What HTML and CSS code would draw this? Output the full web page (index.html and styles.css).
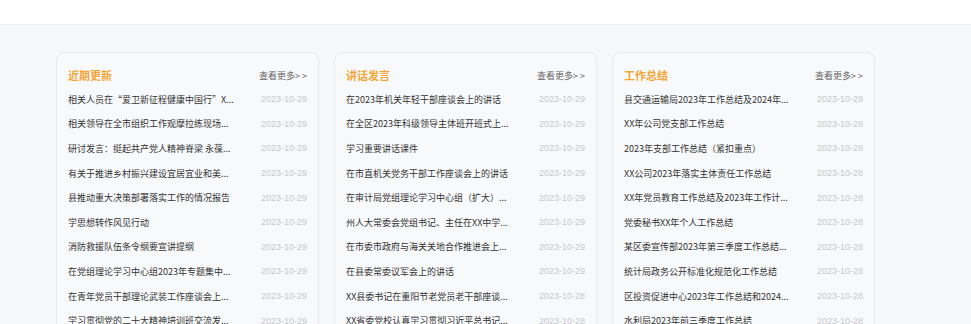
FILE: index.html
```html
<!DOCTYPE html>
<html lang="zh-CN">
<head>
<meta charset="utf-8">
<title>文章列表</title>
<link rel="stylesheet" href="styles.css">
</head>
<body>
<header class="topbar"></header>
<main class="main">
  <section class="card">
    <div class="card-head"><h2 class="card-title">近期更新</h2><a class="more">查看更多&gt; &gt;</a></div>
    <ul class="list">
      <li><span class="t">相关人员在“爱卫新征程健康中国行”X...</span><span class="d">2023-10-29</span></li>
      <li><span class="t">相关领导在全市组织工作观摩拉练现场...</span><span class="d">2023-10-29</span></li>
      <li><span class="t">研讨发言：挺起共产党人精神脊梁 永葆...</span><span class="d">2023-10-29</span></li>
      <li><span class="t">有关于推进乡村振兴建设宜居宜业和美...</span><span class="d">2023-10-29</span></li>
      <li><span class="t">县推动重大决策部署落实工作的情况报告</span><span class="d">2023-10-29</span></li>
      <li><span class="t">学思想转作风见行动</span><span class="d">2023-10-29</span></li>
      <li><span class="t">消防救援队伍条令纲要宣讲提纲</span><span class="d">2023-10-29</span></li>
      <li><span class="t">在党组理论学习中心组2023年专题集中...</span><span class="d">2023-10-29</span></li>
      <li><span class="t">在青年党员干部理论武装工作座谈会上...</span><span class="d">2023-10-29</span></li>
      <li><span class="t">学习贯彻党的二十大精神培训班交流发...</span><span class="d">2023-10-29</span></li>
    </ul>
  </section>
  <section class="card">
    <div class="card-head"><h2 class="card-title">讲话发言</h2><a class="more">查看更多&gt; &gt;</a></div>
    <ul class="list">
      <li><span class="t">在2023年机关年轻干部座谈会上的讲话</span><span class="d">2023-10-29</span></li>
      <li><span class="t">在全区2023年科级领导主体班开班式上...</span><span class="d">2023-10-29</span></li>
      <li><span class="t">学习重要讲话课件</span><span class="d">2023-10-29</span></li>
      <li><span class="t">在市直机关党务干部工作座谈会上的讲话</span><span class="d">2023-10-29</span></li>
      <li><span class="t">在审计局党组理论学习中心组（扩大）...</span><span class="d">2023-10-29</span></li>
      <li><span class="t">州人大常委会党组书记、主任在XX中学...</span><span class="d">2023-10-29</span></li>
      <li><span class="t">在市委市政府与海关关地合作推进会上...</span><span class="d">2023-10-29</span></li>
      <li><span class="t">在县委常委议军会上的讲话</span><span class="d">2023-10-29</span></li>
      <li><span class="t">XX县委书记在重阳节老党员老干部座谈...</span><span class="d">2023-10-28</span></li>
      <li><span class="t">XX省委党校认真学习贯彻习近平总书记...</span><span class="d">2023-10-28</span></li>
    </ul>
  </section>
  <section class="card">
    <div class="card-head"><h2 class="card-title">工作总结</h2><a class="more">查看更多&gt; &gt;</a></div>
    <ul class="list">
      <li><span class="t">县交通运输局2023年工作总结及2024年...</span><span class="d">2023-10-29</span></li>
      <li><span class="t">XX年公司党支部工作总结</span><span class="d">2023-10-28</span></li>
      <li><span class="t">2023年支部工作总结（紧扣重点）</span><span class="d">2023-10-28</span></li>
      <li><span class="t">XX公司2023年落实主体责任工作总结</span><span class="d">2023-10-28</span></li>
      <li><span class="t">XX年党员教育工作总结及2023年工作计...</span><span class="d">2023-10-28</span></li>
      <li><span class="t">党委秘书XX年个人工作总结</span><span class="d">2023-10-28</span></li>
      <li><span class="t">某区委宣传部2023年第三季度工作总结...</span><span class="d">2023-10-28</span></li>
      <li><span class="t">统计局政务公开标准化规范化工作总结</span><span class="d">2023-10-28</span></li>
      <li><span class="t">区投资促进中心2023年工作总结和2024...</span><span class="d">2023-10-28</span></li>
      <li><span class="t">水利局2023年前三季度工作总结</span><span class="d">2023-10-28</span></li>
    </ul>
  </section>
</main>
</body>
</html>
```

FILE: styles.css
```css
* { box-sizing: border-box; }
html, body { margin: 0; padding: 0; }
body {
  background: #f7f8fa;
  font-family: "Noto Sans CJK SC", "Noto Sans", "Liberation Sans", sans-serif;
  color: #333;
  overflow: hidden;
}
.topbar {
  height: 25px;
  background: #fff;
  border-bottom: 1px solid #eef0f3;
}
.main {
  display: flex;
  gap: 15px;
  padding: 27px 0 0 56px;
}
.card {
  width: 263px;
  flex: none;
  background: #f8f9fb;
  border: 1px solid #e7e9ee;
  border-radius: 8px;
  padding: 10px 11px 0;
}
.card-head {
  height: 24px;
  display: flex;
  align-items: center;
  justify-content: space-between;
}
.card-title {
  margin: 0;
  font-size: 11px;
  font-weight: 700;
  color: #f3a535;
  line-height: 14px;
}
.more {
  font-size: 9px;
  color: #666;
  cursor: pointer;
}
.list {
  list-style: none;
  margin: 0;
  padding: 0;
}
.list li {
  height: 24.6px;
  display: flex;
  align-items: center;
  justify-content: space-between;
  font-size: 9px;
}
.t {
  max-width: 180px;
  white-space: nowrap;
  overflow: hidden;
  text-overflow: ellipsis;
  color: #333;
}
.d {
  font-family: "Liberation Sans", Arial, sans-serif;
  color: #c6c8cc;
  font-size: 9px;
}
```
